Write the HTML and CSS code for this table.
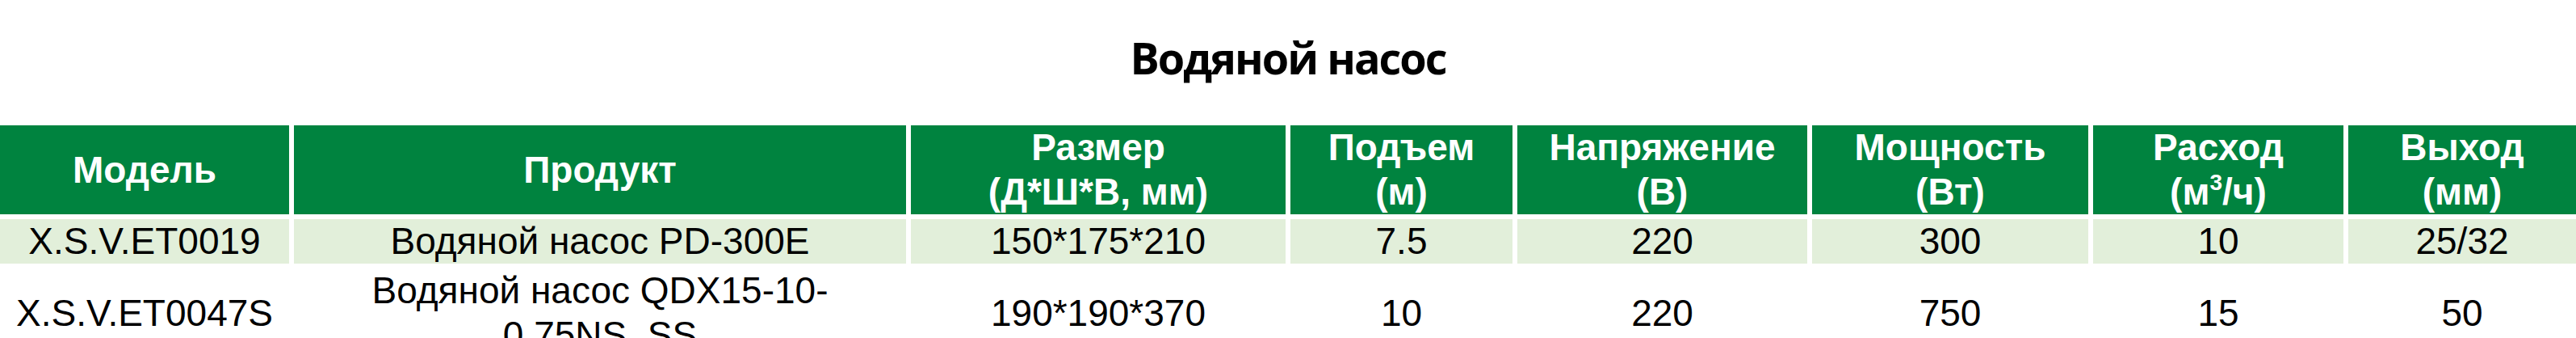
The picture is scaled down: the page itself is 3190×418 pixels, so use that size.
FILE: index.html
```html
<!DOCTYPE html>
<html lang="ru">
<head>
<meta charset="utf-8">
<title>Водяной насос</title>
<link rel="stylesheet" href="styles.css">
</head>
<body>
<h1 class="title">Водяной насос</h1>
<div class="sheet">
  <div class="cell head"><span>Модель</span></div>
  <div class="cell head"><span>Продукт</span></div>
  <div class="cell head"><span>Размер<br>(Д*Ш*В, мм)</span></div>
  <div class="cell head"><span>Подъем<br>(м)</span></div>
  <div class="cell head"><span>Напряжение<br>(В)</span></div>
  <div class="cell head"><span>Мощность<br>(Вт)</span></div>
  <div class="cell head"><span>Расход<br>(м<sup class="sup">3</sup>/ч)</span></div>
  <div class="cell head"><span>Выход<br>(мм)</span></div>

  <div class="cell alt"><span>X.S.V.ET0019</span></div>
  <div class="cell alt"><span>Водяной насос PD-300E</span></div>
  <div class="cell alt"><span>150*175*210</span></div>
  <div class="cell alt"><span>7.5</span></div>
  <div class="cell alt"><span>220</span></div>
  <div class="cell alt"><span>300</span></div>
  <div class="cell alt"><span>10</span></div>
  <div class="cell alt"><span>25/32</span></div>

  <div class="cell"><span>X.S.V.ET0047S</span></div>
  <div class="cell"><span>Водяной насос QDX15-10-<wbr>0.75NS_SS</span></div>
  <div class="cell"><span>190*190*370</span></div>
  <div class="cell"><span>10</span></div>
  <div class="cell"><span>220</span></div>
  <div class="cell"><span>750</span></div>
  <div class="cell"><span>15</span></div>
  <div class="cell"><span>50</span></div>
</div>
</body>
</html>
```

FILE: styles.css
```css
html, body {
  margin: 0;
  padding: 0;
  background: #ffffff;
}

body {
  overflow: hidden;
}

.title {
  margin: 43px 0 55px;
  height: 57px;
  font-family: "Open Sans", "Noto Sans", sans-serif;
  font-weight: 700;
  font-size: 54px;
  letter-spacing: -2px;
  line-height: 57px;
  text-align: center;
  color: #000000;
}

.sheet {
  display: grid;
  grid-template-columns: 358px 758px 464px 275px 359px 342px 310px 282px;
  column-gap: 6px;
  row-gap: 6px;
  width: 3190px;
}

.cell {
  display: flex;
  align-items: center;
  justify-content: center;
  text-align: center;
  font-family: "Liberation Sans", Arial, sans-serif;
  font-size: 46px;
  line-height: 55px;
  color: #000000;
  min-height: 55px;
}

.head {
  background: #00833f;
  color: #ffffff;
  font-weight: 700;
  height: 110px;
}

.alt {
  background: #e2efda;
}

.sup {
  font-size: 28px;
  line-height: 0;
  vertical-align: 18px;
}
```
